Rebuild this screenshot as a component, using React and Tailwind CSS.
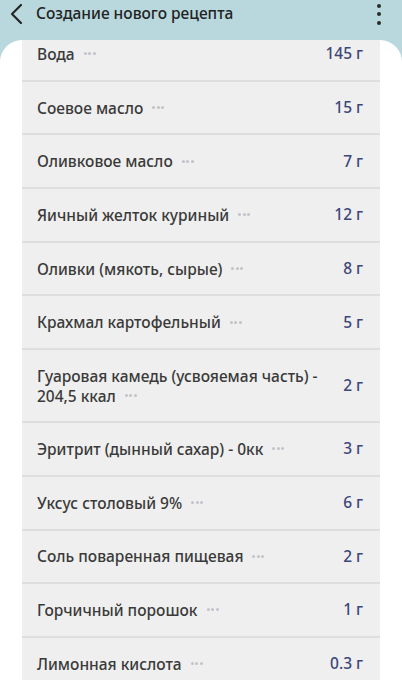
const ITEMS = [
  { name: "Вода", amount: "145 г" },
  { name: "Соевое масло", amount: "15 г" },
  { name: "Оливковое масло", amount: "7 г" },
  { name: "Яичный желток куриный", amount: "12 г" },
  { name: "Оливки (мякоть, сырые)", amount: "8 г" },
  { name: "Крахмал картофельный", amount: "5 г" },
  { name: "Гуаровая камедь (усвояемая часть) - 204,5 ккал", amount: "2 г", tall: true },
  { name: "Эритрит (дынный сахар) - 0кк", amount: "3 г" },
  { name: "Уксус столовый 9%", amount: "6 г" },
  { name: "Соль поваренная пищевая", amount: "2 г" },
  { name: "Горчичный порошок", amount: "1 г" },
  { name: "Лимонная кислота", amount: "0.3 г" },
];

// ─── DOTS (the "more" hint after each ingredient) ─────────────────────────────
function Dots() {
  return (
    <span className="inline-flex items-center gap-[1.5px] ml-[9px] align-middle relative -top-[2px]">
      <span className="w-[3px] h-[3px] rounded-full bg-[#c2c2ca]" />
      <span className="w-[3px] h-[3px] rounded-full bg-[#c2c2ca]" />
      <span className="w-[3px] h-[3px] rounded-full bg-[#c2c2ca]" />
    </span>
  );
}

function Row({ item }) {
  return (
    <div
      className={`flex items-center justify-between pl-[15px] pr-[17px] border-b-2 border-[#dedede] ${
        item.tall ? "h-[73px]" : "h-[53.7px]"
      }`}
    >
      <div className="text-[15.5px] leading-[20px] font-medium text-[#3a3a3a] pr-[24px]">
        {item.name}
        <Dots />
      </div>
      <div className="text-[15.5px] font-medium text-[#3c4679] whitespace-nowrap">{item.amount}</div>
    </div>
  );
}

export default function App() {
  return (
    <div
      className="w-[402px] h-[680px] overflow-hidden flex flex-col bg-[#b8d8dd]"
      style={{ fontFamily: "'Noto Sans', 'Open Sans', sans-serif" }}
    >
      {/* Header */}
      <div className="h-[40px] shrink-0">
        <div className="h-[28px] flex items-center">
          <svg
            width="14"
            height="22"
            viewBox="0 0 14 22"
            fill="none"
            stroke="#262626"
            strokeWidth="2.2"
            strokeLinecap="round"
            strokeLinejoin="round"
            className="ml-[9px]"
          >
            <path d="M12 2 L3 11 L12 20" />
          </svg>
          <span className="ml-[13px] text-[15.5px] text-[#232323] font-medium">Создание нового рецепта</span>
          <div className="ml-auto mr-[21px] flex flex-col gap-[4.5px]">
            <span className="w-[4px] h-[4px] rounded-full bg-[#2a2a2a]" />
            <span className="w-[4px] h-[4px] rounded-full bg-[#2a2a2a]" />
            <span className="w-[4px] h-[4px] rounded-full bg-[#2a2a2a]" />
          </div>
        </div>
      </div>

      {/* Card */}
      <div className="flex-1 bg-white rounded-t-[22px] overflow-hidden px-[22px]">
        <div className="bg-[#efefef] -mt-[12px] w-[358px]">
          {ITEMS.map((item) => (
            <Row key={item.name} item={item} />
          ))}
        </div>
      </div>
    </div>
  );
}
